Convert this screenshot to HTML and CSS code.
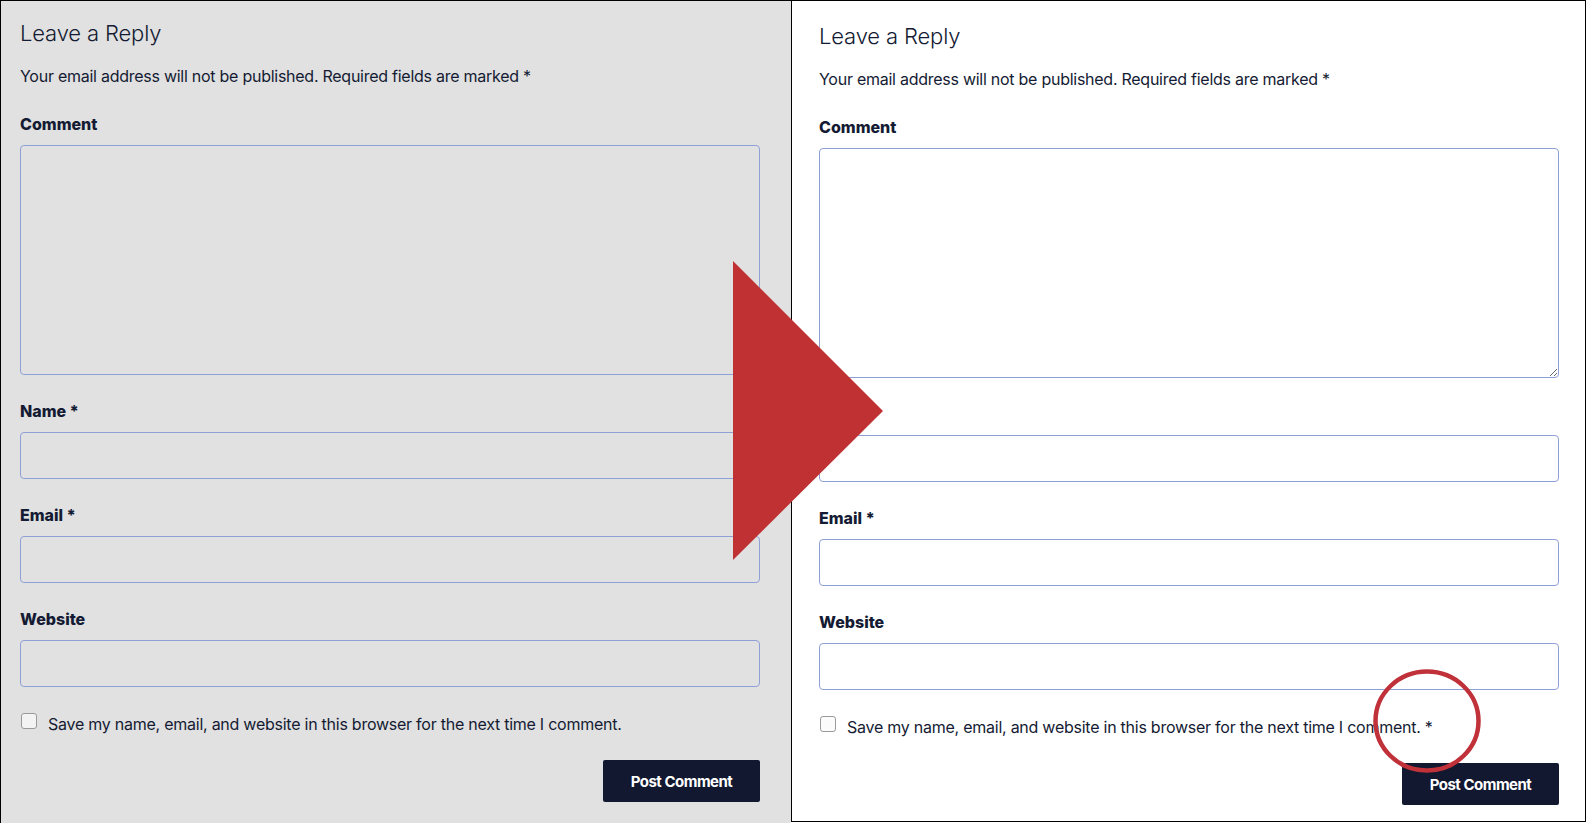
FILE: index.html
```html
<!DOCTYPE html>
<html lang="en">
<head>
<meta charset="utf-8">
<title>Leave a Reply – comparison</title>
<link rel="stylesheet" href="styles.css">
</head>
<body>
<div class="stage">
  <section class="panel panel-old">
    <form class="reply">
      <h3 class="reply-title">Leave a Reply</h3>
      <p class="notes">Your email address will not be published. Required fields are marked *</p>
      <div class="field">
        <label>Comment</label>
        <textarea class="area"></textarea>
      </div>
      <div class="field">
        <label>Name *</label>
        <input class="box" type="text">
      </div>
      <div class="field">
        <label>Email *</label>
        <input class="box" type="text">
      </div>
      <div class="field">
        <label>Website</label>
        <input class="box" type="text">
      </div>
      <p class="consent">
        <input class="check" type="checkbox">
        <span class="consent-text">Save my name, email, and website in this browser for the next time I comment.</span>
      </p>
      <p class="submit"><button class="btn" type="button">Post Comment</button></p>
    </form>
  </section>
  <section class="panel panel-new">
    <form class="reply">
      <h3 class="reply-title">Leave a Reply</h3>
      <p class="notes">Your email address will not be published. Required fields are marked *</p>
      <div class="field">
        <label>Comment</label>
        <textarea class="area"></textarea>
      </div>
      <div class="field">
        <label>Name *</label>
        <input class="box" type="text">
      </div>
      <div class="field">
        <label>Email *</label>
        <input class="box" type="text">
      </div>
      <div class="field">
        <label>Website</label>
        <input class="box" type="text">
      </div>
      <p class="consent">
        <input class="check" type="checkbox">
        <span class="consent-text">Save my name, email, and website in this browser for the next time I comment. *</span>
      </p>
      <p class="submit"><button class="btn" type="button">Post Comment</button></p>
    </form>
  </section>
  <svg class="arrow" width="151" height="300" viewBox="0 0 151 300"><polygon points="0,0 150,150 0,299" fill="#c03133"/></svg>
  <svg class="mark" width="120" height="116" viewBox="0 0 120 116"><ellipse cx="60" cy="58" rx="51.5" ry="49.5" fill="none" stroke="#c0313a" stroke-width="4.5"/></svg>
</div>
</body>
</html>
```
FILE: styles.css
```css
* { box-sizing: border-box; }
body {
  margin: 0;
  background: #fff;
  font-family: Inter, "Noto Sans", sans-serif;
  color: #141b33;
}
.stage {
  position: relative;
  display: flex;
  align-items: flex-start;
  width: 1586px;
  height: 823px;
  overflow: hidden;
}
.panel-old {
  width: 791px;
  height: 823px;
  background: #e1e1e1;
  border-top: 1px solid #000;
  border-left: 1px solid #000;
  padding: 16px 0 0 19px;
}
.panel-new {
  width: 795px;
  height: 822px;
  background: #fff;
  border: 1px solid #000;
  padding: 19px 0 0 27px;
}
.reply {
  width: 740px;
  margin: 0;
}
.reply-title {
  margin: 0;
  font-size: 22px;
  font-weight: 300;
  line-height: 32px;
  letter-spacing: -0.15px;
}
.notes {
  margin: 15px 0 0;
  font-size: 16px;
  line-height: 24px;
  letter-spacing: -0.26px;
}
.field {
  margin-top: 24px;
  display: flex;
  flex-direction: column;
}
.field label {
  font-size: 16px;
  font-weight: 800;
  line-height: 24px;
  margin-bottom: 9px;
}
.box, .area {
  display: block;
  width: 100%;
  height: 47px;
  margin: 0;
  border: 1px solid #8fa0d6;
  border-radius: 4px;
  background: transparent;
  font: inherit;
}
.area {
  height: 230px;
  resize: vertical;
}
.consent {
  margin: 25px 0 0;
  display: flex;
  align-items: flex-start;
  font-size: 16px;
  line-height: 24px;
  letter-spacing: -0.25px;
}
.check {
  appearance: none;
  -webkit-appearance: none;
  width: 16px;
  height: 16px;
  margin: 1px 11px 0 1px;
  border: 1px solid #9a9a9a;
  border-radius: 3px;
  background: #f3f3f3;
  flex: none;
}
.panel-new .check { background: #fbfbfb; }
.submit {
  margin: 24px 0 0;
  display: flex;
  justify-content: flex-end;
}
.btn {
  width: 157px;
  height: 42px;
  border: none;
  border-radius: 2px;
  background: #111830;
  color: #fff;
  font-family: inherit;
  font-size: 15px;
  font-weight: 700;
  letter-spacing: -0.5px;
  padding: 0;
}
.arrow {
  position: absolute;
  left: 733px;
  top: 261px;
}
.mark {
  position: absolute;
  left: 1367px;
  top: 663px;
}
```
